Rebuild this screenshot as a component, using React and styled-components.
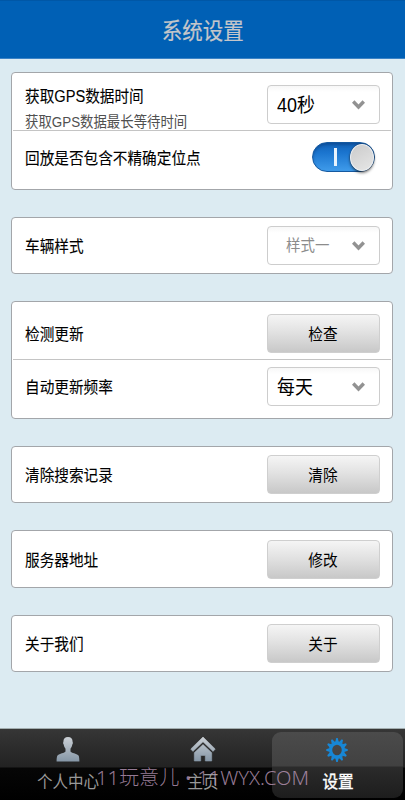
import React from 'react'
import styled, { createGlobalStyle, css } from 'styled-components'

const GlobalStyle = createGlobalStyle`
  * {
    box-sizing: border-box;
  }
  body {
    margin: 0;
    background: #dcebf2;
    font-family: 'Liberation Sans', 'Noto Sans CJK SC', sans-serif;
  }
`

const Screen = styled.div`
  display: flex;
  flex-direction: column;
  width: 405px;
  height: 800px;
  overflow: hidden;
  background: #dcebf2;
`

const Header = styled.header`
  display: flex;
  flex: none;
  align-items: center;
  justify-content: center;
  height: 59px;
  padding-top: 4px;
  background: #0060b5;
  border-top: 1px solid #0057a6;
  border-bottom: 1px solid #3b83c6;
`

// the device renders its font slightly condensed
const condensed = css`
  display: inline-block;
  white-space: nowrap;
  transform: scaleX(0.915);
`

const Title = styled.h1`
  ${condensed}
  margin: 0;
  font-size: 22.4px;
  font-weight: 400;
  line-height: 30px;
  color: #c4c6ca;
  -webkit-text-stroke: 0.2px #c4c6ca;
`

const List = styled.main`
  display: flex;
  flex: 1;
  flex-direction: column;
  gap: 27px;
  padding: 13px 12px 0 11px;
`

const Card = styled.section`
  flex: none;
  height: ${p => (p.$tall ? '117.5px' : '57.5px')};
  padding: 0 1px;
  background: #fff;
  border: 1px solid #a3a6aa;
  border-radius: 4px;
`

const Row = styled.div`
  display: flex;
  align-items: flex-start;
  justify-content: space-between;
  height: ${p => p.$height || 56}px;
  padding: ${p => p.$top}px 11px 0 12px;
  border-bottom: ${p => (p.$divider ? '1px solid #c4c4c4' : '0')};
`

const Labels = styled.div`
  display: flex;
  flex-direction: column;
  align-items: flex-start;
  padding-top: ${p => p.$top}px;
`

const Label = styled.span`
  ${condensed}
  transform-origin: 0 50%;
  font-size: 16px;
  line-height: 24px;
  color: #000;
  -webkit-text-stroke: 0.1px #000;
`

const Hint = styled.span`
  ${condensed}
  transform: scaleX(0.905);
  transform-origin: 0 50%;
  margin-top: 2px;
  font-size: 14.8px;
  line-height: 22px;
  color: #505050;
`

const Button = styled.button`
  width: 113px;
  height: 39px;
  padding: 0 0 1px;
  font-family: inherit;
  font-size: 16px;
  color: #000;
  background: linear-gradient(#f5f5f5, #e2e2e2 45%, #c8c8c8);
  border: 1px solid #cfcfcf;
  border-radius: 4px;

  > span {
    ${condensed}
  }
`

const SelectBox = styled.div`
  display: flex;
  align-items: center;
  justify-content: space-between;
  width: 113px;
  height: 39px;
  padding: 0 14px 0 ${p => (p.$muted ? 18 : 9)}px;
  background: linear-gradient(#f7f7f7, #fff 6px);
  border: 1px solid #cdcdcd;
  border-radius: 4px;

  > span {
    ${condensed}
    transform-origin: 0 50%;
    font-size: ${p => (p.$muted ? 15.8 : 19.6)}px;
    line-height: 30px;
    color: ${p => (p.$muted ? '#8c8c8c' : '#000')};
  }
`

const Track = styled.div`
  position: relative;
  width: 63px;
  height: 30px;
  margin-right: 5px;
  background: linear-gradient(#1263b8, #1b75cf 35%, #3f9bea);
  border: 1px solid #1559a0;
  border-radius: 15px;
  box-shadow: inset 0 2px 3px rgba(0, 30, 80, 0.3);

  &::before {
    content: '';
    position: absolute;
    top: 5px;
    left: 21px;
    width: 3px;
    height: 18px;
    background: #e8f3fd;
  }
`

const Knob = styled.div`
  position: absolute;
  top: 1px;
  right: 0;
  width: 24px;
  height: 27px;
  background: linear-gradient(150deg, #cbcbcb, #e6e6e6);
  border: 1px solid #f0f0f0;
  border-radius: 50%;
  box-shadow: 0 2px 3px rgba(0, 0, 0, 0.5), 0 0 1px 0.5px rgba(50, 60, 80, 0.5);
`

const TabBar = styled.nav`
  position: relative;
  display: grid;
  flex: none;
  grid-template-columns: repeat(3, 1fr);
  height: 72px;
  background: linear-gradient(#363636, #222 38px, #060606 39px, #000);
  border-top: 1px solid #a2adaf;
`

const Tab = styled.div`
  display: flex;
  flex-direction: column;
  align-items: center;
  margin: ${p => (p.$active ? '3px 2px 2px' : '3px 0 2px')};
  padding-top: 4px;
  border-radius: 9px;
  background: ${p =>
    p.$active ? 'linear-gradient(#4b4b4b, #414141 34px, #2b2b2b 35px, #1d1d1d)' : 'none'};

  > svg {
    flex: none;
    margin-left: ${p => (p.$active ? '-1px' : '0')};
  }
  > span {
    ${condensed}
    margin-top: 8px;
    font-size: 17px;
    line-height: 24px;
    color: ${p => (p.$active ? '#fff' : '#999')};
    -webkit-text-stroke: ${p => (p.$active ? '0.4px #fff' : '0')};
  }
`

const Watermark = styled.div`
  position: absolute;
  top: 35px;
  left: 96px;
  font-family: 'Noto Sans', 'Noto Sans CJK SC', sans-serif;
  font-size: 20.1px;
  font-weight: 300;
  line-height: 28px;
  white-space: nowrap;
  color: rgba(190, 155, 188, 0.78);
`

const Chevron = () => (
  <svg width='13' height='10' viewBox='0 0 13 10' fill='none'>
    <path d='M1.2 1.500 6.500 7 11.800 1.500' stroke='#929292' strokeWidth='3.5' />
  </svg>
)

const Select = ({ value, muted }) => (
  <SelectBox $muted={muted}>
    <span>{value}</span>
    <Chevron />
  </SelectBox>
)

const Action = ({ children }) => (
  <Button>
    <span>{children}</span>
  </Button>
)

const SteelGradient = ({ id }) => (
  <linearGradient id={id} x1='0' y1='0' x2='0' y2='1'>
    <stop offset='0' stopColor='#cbd0d5' />
    <stop offset='1' stopColor='#8596a6' />
  </linearGradient>
)

const UserIcon = () => (
  <svg width='26' height='27' viewBox='0 0 26 27'>
    <defs>
      <SteelGradient id='user' />
    </defs>
    <path
      fill='url(#user)'
      d='M13 1c3 0 4.7 1.7 4.6 4.7.5.7.3 2.1-.3 2.9-.3 1.9-1 3.2-1.8 4.1v2.7c.8 1.5 6.2 2.2 7.8 3.800 1 1 1 4 1.100 6.400H1.600c0-2.400.1-5.400 1.100-6.400 1.600-1.600 7-2.300 7.800-3.800v-2.700c-.8-.9-1.500-2.200-1.800-4.100-.6-.8-.8-2.200-.3-2.900C8.300 2.700 10 1 13 1z'
    />
  </svg>
)

const HomeIcon = () => (
  <svg width='26' height='27' viewBox='0 0 26 27'>
    <defs>
      <SteelGradient id='home' />
    </defs>
    <path
      fill='url(#home)'
      stroke='url(#home)'
      strokeWidth='.6'
      strokeLinejoin='round'
      d='M13 1 .8 13l2.100 2.400L13 5.800l10.100 9.600 2.100-2.400zM13 8.600 4.300 16.700V25h6.400v-5.600h4.600V25h6.400v-8.300z'
    />
  </svg>
)

const TEETH = Array.from({ length: 12 }, (_, i) => i * 30)

const GearIcon = () => (
  <svg width='26' height='27' viewBox='0 0 26 27'>
    <g transform='translate(13 14) scale(.9 1)'>
      <circle r='7' fill='none' stroke='#1787d6' strokeWidth='3.4' />
      {TEETH.map(angle => (
        <path
          key={angle}
          d='M-2-8-.8-12H.8L2-8z'
          fill='#1787d6'
          transform={`rotate(${angle})`}
        />
      ))}
    </g>
  </svg>
)

const App = () => (
  <>
    <GlobalStyle />
    <Screen>
      <Header>
        <Title>系统设置</Title>
      </Header>
      <List>
        <Card $tall>
          <Row $height={58} $top={12} $divider>
            <Labels $top={-1}>
              <Label>获取GPS数据时间</Label>
              <Hint>获取GPS数据最长等待时间</Hint>
            </Labels>
            <Select value='40秒' />
          </Row>
          <Row $top={11}>
            <Labels $top={5}>
              <Label>回放是否包含不精确定位点</Label>
            </Labels>
            <Track>
              <Knob />
            </Track>
          </Row>
        </Card>
        <Card>
          <Row $top={8.5}>
            <Labels $top={8.5}>
              <Label>车辆样式</Label>
            </Labels>
            <Select value='样式一' muted />
          </Row>
        </Card>
        <Card $tall>
          <Row $height={58} $top={12} $divider>
            <Labels $top={9}>
              <Label>检测更新</Label>
            </Labels>
            <Action>检查</Action>
          </Row>
          <Row $top={7}>
            <Labels $top={9}>
              <Label>自动更新频率</Label>
            </Labels>
            <Select value='每天' />
          </Row>
        </Card>
        <Card>
          <Row $top={8.4}>
            <Labels $top={9.6}>
              <Label>清除搜索记录</Label>
            </Labels>
            <Action>清除</Action>
          </Row>
        </Card>
        <Card>
          <Row $top={8.5}>
            <Labels $top={9.5}>
              <Label>服务器地址</Label>
            </Labels>
            <Action>修改</Action>
          </Row>
        </Card>
        <Card>
          <Row $top={8.4}>
            <Labels $top={9.6}>
              <Label>关于我们</Label>
            </Labels>
            <Action>关于</Action>
          </Row>
        </Card>
      </List>
      <TabBar>
        <Tab>
          <UserIcon />
          <span>个人中心</span>
        </Tab>
        <Tab>
          <HomeIcon />
          <span>主页</span>
        </Tab>
        <Tab $active>
          <GearIcon />
          <span>设置</span>
        </Tab>
        <Watermark>11玩意儿 • 11WYX.COM</Watermark>
      </TabBar>
    </Screen>
  </>
)

export default App
